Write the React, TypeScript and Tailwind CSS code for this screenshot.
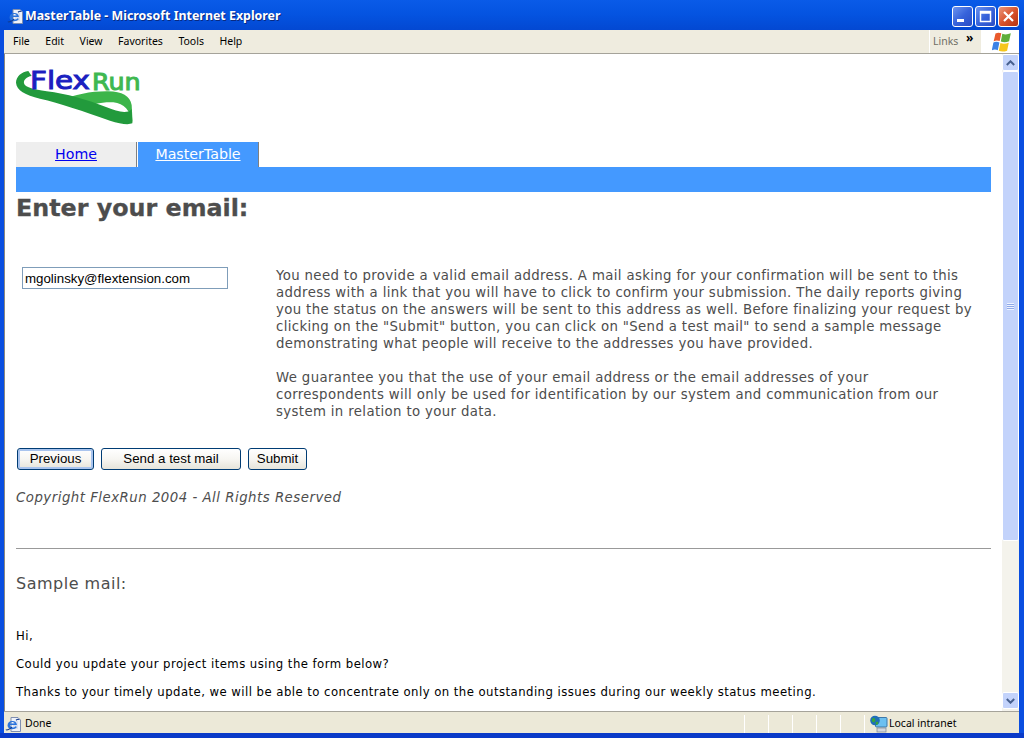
import React from 'react';

const uiFont = "font-['Noto_Sans','DejaVu_Sans',sans-serif]";

const IeIcon = () => (
  <svg width="17" height="17" viewBox="0 0 17 17" className="shrink-0">
    <path d="M6 1.500h7l2.500 2.500v11.500H6z" fill="#eef2fa" stroke="#7f8fb0" />
    <path d="M8 6h5M8 8h5M8 10h5M8 12h5" stroke="#c5cfe4" />
    <path d="M2.500 9.500a4.800 4.800 0 0 1 9.500-.5H5c.2 2.800 4 3.200 5.600 1.200l1.300.8c-2.500 3.500-9.400 2.600-9.400-1.500zM5.200 7.600h4.400c-.5-2-3.800-2-4.400 0z" fill="#2a73dc" fillRule="evenodd" />
    <path d="M1 13.500c.8 1.200 3.600-.3 6-2.400M11 4.200c1.500-1.100 3-1.300 3-.2" fill="none" stroke="#123a8c" strokeWidth="1.100" />
  </svg>
);

const WinFlag = () => (
  <svg width="20" height="20" viewBox="0 0 20 20">
    <path d="M3.500 1.500c2-1 4-1 5.800-.2L7.700 9c-2-.8-4-.8-6 .2z" fill="#e9592c" />
    <path d="M10.300 1.700c2.500 1 5 1 8.500-.4l-1.700 8c-3 1.300-5.500 1.300-8.300.3z" fill="#5fae3a" />
    <path d="M1.400 10.400c2-1 4-1 6 .1L5.800 18.200c-2-1-4-1-6 .1z" fill="#3b82e6" />
    <path d="M8.400 11.100c2.600 1 5 1 8.400-.4l-1.700 8c-3.200 1.200-6 1.200-8.300.1z" fill="#f5c61c" />
  </svg>
);

const NetIcon = () => (
  <svg width="18" height="18" viewBox="0 0 18 18" className="shrink-0">
    <rect x="5.500" y="2.500" width="11.500" height="9.500" rx="1" fill="#6cc0f0" stroke="#3d78a8" />
    <rect x="7" y="13" width="9" height="4" fill="#d3d7dd" stroke="#7d8590" strokeWidth="0.7" />
    <circle cx="5" cy="5.500" r="4.800" fill="#1f6fb8" />
    <path d="M2 3.500c2-1.200 3.300-.5 3.300 1.800S3.200 7.500 2 6.500zM6 7c1.500-.5 2.800 0 2.300 1.500s-2.200 1.500-2.800.5z" fill="#38a53c" />
  </svg>
);

const TitleButton = ({ kind }: { kind: 'min' | 'max' | 'close' }) => (
  <div
    className={`w-[21px] h-[21px] rounded-[3px] border border-white flex items-center justify-center ${
      kind === 'close'
        ? 'bg-gradient-to-br from-[#e9967a] via-[#d9532c] to-[#b5320f]'
        : 'bg-gradient-to-br from-[#6d93ee] via-[#3763db] to-[#2a4cc4]'
    }`}
  >
    <svg width="15" height="15" viewBox="0 0 15 15">
      {kind === 'min' && <rect x="2" y="10" width="7" height="3" fill="#fff" />}
      {kind === 'max' && (
        <path d="M2.500 2.500h10v10h-10z M2.500 4h10" fill="none" stroke="#fff" strokeWidth="1.500" />
      )}
      {kind === 'close' && <path d="M3 3l9 9M12 3l-9 9" stroke="#fff" strokeWidth="2.200" />}
    </svg>
  </div>
);

const ScrollButton = ({ up }: { up?: boolean }) => (
  <div className="w-[17px] h-[17px] shrink-0 rounded-[2px] border border-white bg-[#c3d3fb] flex items-center justify-center">
    <svg width="9" height="6" viewBox="0 0 9 6">
      <path d={up ? 'M.8 5l3.700-3.700L8.200 5' : 'M.8 1l3.700 3.700L8.200 1'} fill="none" stroke="#47608f" strokeWidth="2" />
    </svg>
  </div>
);

const XpButton = ({ label, width, focused }: { label: string; width: string; focused?: boolean }) => (
  <button
    className={`h-[22px] ${width} rounded-[3px] border border-[#003c74] bg-gradient-to-b from-white via-[#f7f6f2] to-[#e6e4da] text-[13.300px] text-black font-['Liberation_Sans',sans-serif] ${
      focused ? 'shadow-[inset_0_0_0_2px_#a9c4ee]' : ''
    }`}
  >
    {label}
  </button>
);

export default function App() {
  return (
    <div className="w-[1024px] h-[738px] overflow-hidden flex flex-col bg-[#0a4ee0]">
      {/* title bar */}
      <div className="h-[30px] shrink-0 flex items-center pt-[3px] pl-[7px] pr-[5px] bg-gradient-to-b from-[#0a5be8] via-[#0453e0] to-[#0348d2]">
        <IeIcon />
        <span className={`ml-px text-[12.400px] font-bold text-white ${uiFont} [text-shadow:1px_1px_#0a2a80]`}>
          MasterTable - Microsoft Internet Explorer
        </span>
        <div className="ml-auto flex gap-[2px]">
          <TitleButton kind="min" />
          <TitleButton kind="max" />
          <TitleButton kind="close" />
        </div>
      </div>

      <div className="flex-1 min-h-0 ml-[4px] mr-[5px] flex flex-col bg-[#ece9d8]">
        {/* menu */}
        <div className={`h-[24px] shrink-0 flex items-center text-[10.500px] text-black bg-[#efecdf] border-b border-[#a5a39a] ${uiFont}`}>
          <div className="flex pl-[9px] gap-[15.500px] flex-1">
            <span>File</span>
            <span>Edit</span>
            <span>View</span>
            <span>Favorites</span>
            <span>Tools</span>
            <span>Help</span>
          </div>
          <div className="w-[52px] h-full flex pl-[3px] pt-[4px] border-l border-white text-[#6f6f66] relative">
            Links
            <span className="absolute left-[36px] top-[-1px] font-bold text-black text-[12px]">»</span>
          </div>
          <div className="w-[38px] h-full bg-white flex items-center justify-center pl-[4px]">
            <WinFlag />
          </div>
        </div>

        {/* page + scrollbar */}
        <div className="flex-1 min-h-0 flex bg-white border-l border-[#8a8880]">
          <div className="flex-1 min-w-0 overflow-hidden pl-[11px] pr-[11px] font-['DejaVu_Sans',sans-serif]">
            <div className="h-[88px] pt-[6px]">
              <svg width="128" height="66" viewBox="18 0 384 198" className="block">
                <path d="M150 122C195 104 240 94 290 94c45-1 70 14 75 41l3 55c-8-38-25-60-58-63-30-2-70 6-95 18z" fill="#3cb54a" />
                <path d="M55 33C35 35 18 50 18 68c2 24 27 36 72 48 60 13 130 38 210 66 30 10 55 13 67 8l-2-42c-15 16-45 6-75-6-60-23-120-41-180-48-40-6-65-12-68-24-2-10 8-20 23-22z" fill="#229a3c" />
                <text x="60" y="88" fontFamily="DejaVu Sans, sans-serif" fontSize="74" textLength="180" lengthAdjust="spacingAndGlyphs" fill="#1a1fc0" stroke="#1a1fc0" strokeWidth="3">Flex</text>
                <text x="246" y="90" fontFamily="DejaVu Sans, sans-serif" fontSize="68" textLength="146" lengthAdjust="spacingAndGlyphs" fill="#3fb850" stroke="#3fb850" strokeWidth="3">Run</text>
              </svg>
            </div>

            <div className="flex h-[25px] text-[14.200px]">
              <a className="w-[121px] pt-px bg-[#eeeeee] border-r border-[#808080] flex items-center justify-center text-[#0000ee] underline">Home</a>
              <a className="ml-px w-[121px] pt-px bg-[#4499ff] border-r border-[#808080] flex items-center justify-center text-white underline">MasterTable</a>
            </div>
            <div className="h-[25px] bg-[#4499ff]" />

            <h1 className="pt-[2px] text-[23.800px] leading-[29px] font-bold text-[#4d4d4d] [-webkit-text-stroke:0.3px_#4d4d4d]">Enter your email:</h1>

            <div className="flex mt-[44px]">
              <div className="w-[260px] pl-[6px] shrink-0">
                <input
                  readOnly
                  value="mgolinsky@flextension.com"
                  className="block w-[206px] h-[22px] border border-[#7f9db9] px-[2px] text-[13.300px] text-black font-['Liberation_Sans',sans-serif] outline-none"
                />
              </div>
              <div className="text-[13.300px] tracking-[0.36px] leading-[17px] text-[#4d4d4d] whitespace-nowrap">
                <p>
                  You need to provide a valid email address. A mail asking for your confirmation will be sent to this<br />
                  address with a link that you will have to click to confirm your submission. The daily reports giving<br />
                  you the status on the answers will be sent to this address as well. Before finalizing your request by<br />
                  clicking on the "Submit" button, you can click on "Send a test mail" to send a sample message<br />
                  demonstrating what people will receive to the addresses you have provided.
                </p>
                <p className="mt-[17px]">
                  We guarantee you that the use of your email address or the email addresses of your<br />
                  correspondents will only be used for identification by our system and communication from our<br />
                  system in relation to your data.
                </p>
              </div>
            </div>

            <div className="flex gap-[7px] mt-[28px] pl-px">
              <XpButton label="Previous" width="w-[77px]" focused />
              <XpButton label="Send a test mail" width="w-[140px]" />
              <XpButton label="Submit" width="w-[59px]" />
            </div>

            <p className="mt-[19px] text-[13.300px] tracking-[0.5px] leading-[17px] italic text-[#4d4d4d]">Copyright FlexRun 2004 - All Rights Reserved</p>

            <hr className="mt-[42px] border-t border-b-0 border-[#999999]" />

            <h2 className="mt-[25px] text-[16px] tracking-[0.5px] leading-[19px] text-[#4d4d4d]">Sample mail:</h2>

            <div className="mt-[36px] text-[11.700px] tracking-[0.45px] leading-[14px] text-black">
              <p>Hi,</p>
              <p className="mt-[14px]">Could you update your project items using the form below?</p>
              <p className="mt-[14px] whitespace-nowrap">Thanks to your timely update, we will be able to concentrate only on the outstanding issues during our weekly status meeting.</p>
            </div>
          </div>

          {/* scrollbar */}
          <div className="w-[17px] shrink-0 flex flex-col bg-[#f4f3ec] pb-[2px]">
            <ScrollButton up />
            <div className="h-[470px] rounded-[2px] border border-white bg-[#c3d3fb] flex items-center justify-center">
              <div className="w-[7px] h-[7px] bg-[repeating-linear-gradient(#eef3ff_0,#eef3ff_1px,#8fa9e8_1px,#8fa9e8_2px)]" />
            </div>
            <div className="flex-1" />
            <ScrollButton />
          </div>
        </div>

        {/* status bar */}
        <div className={`h-[22px] shrink-0 flex items-center pt-[3px] text-[10.500px] text-black bg-[#ece9d8] border-t border-[#a5a39a] ${uiFont}`}>
          <div className="pl-[1px] flex items-center gap-[3px] flex-1">
            <IeIcon />
            <span>Done</span>
          </div>
          {[0, 1, 2, 3, 4].map(i => (
            <div key={i} className="w-[24px] h-full border-l border-white" />
          ))}
          <div className="w-[139px] h-full pl-[5px] border-l border-white flex items-center gap-px">
            <NetIcon />
            <span>Local intranet</span>
          </div>
          <div className="w-[16px]" />
        </div>
      </div>
      <div className="h-[5px] shrink-0 bg-[#0a3ac8]" />
    </div>
  );
}
